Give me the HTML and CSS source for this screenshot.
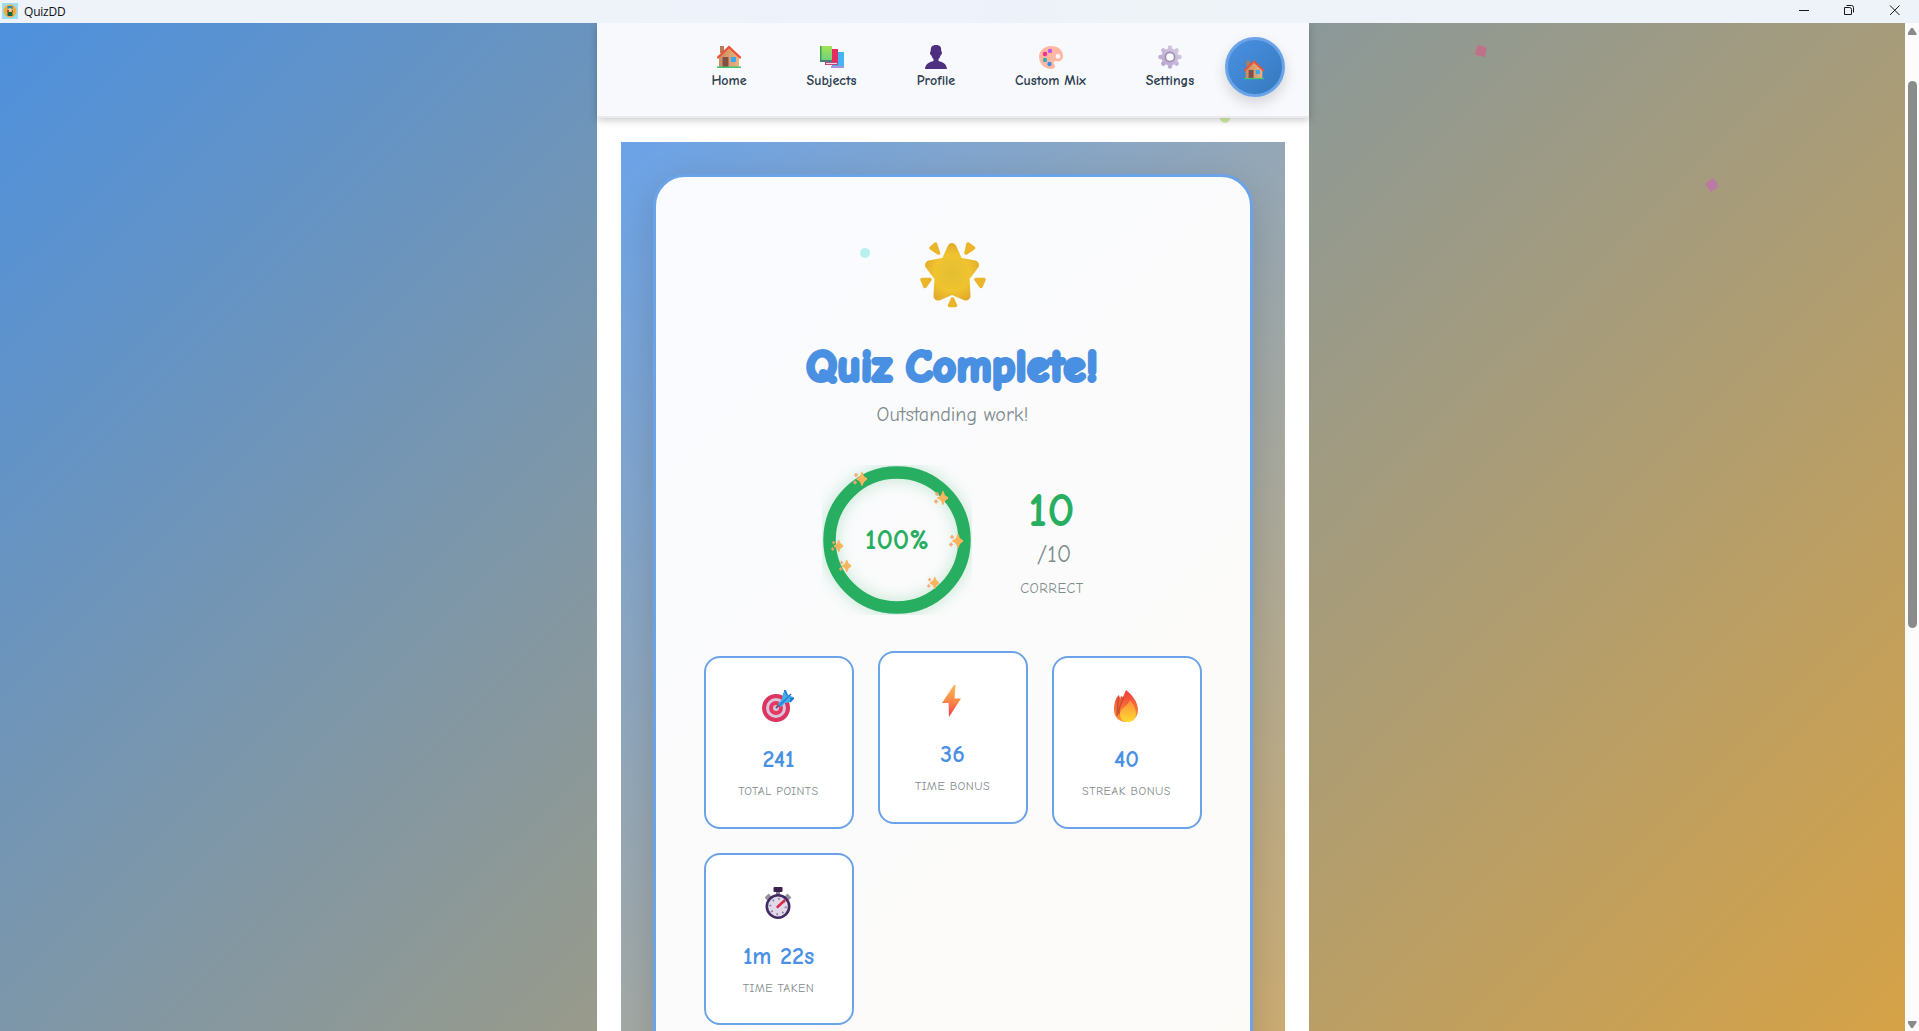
FILE: index.html
```html
<!DOCTYPE html>
<html lang="en">
<head>
<meta charset="utf-8">
<title>QuizDD</title>
<link rel="stylesheet" href="styles.css">
</head>
<body>
<svg class="defs" width="0" height="0" aria-hidden="true">
  <defs>
    <linearGradient id="wall"><stop offset="0" stop-color="#c98d60"/><stop offset="1" stop-color="#eab27f"/></linearGradient>
    <linearGradient id="bolt" x2="0" y2="1"><stop offset="0" stop-color="#fbb84b"/><stop offset=".55" stop-color="#fa8347"/><stop offset="1" stop-color="#f0374f"/></linearGradient>
    <linearGradient id="flame" x2="0" y2="1"><stop offset="0" stop-color="#f03a3c"/><stop offset="1" stop-color="#ff9a35"/></linearGradient>
    <linearGradient id="core" x2="0" y2="1"><stop offset="0" stop-color="#ff8b38"/><stop offset="1" stop-color="#ffdb32"/></linearGradient>
    <radialGradient id="gold" gradientUnits="userSpaceOnUse" cx="32" cy="31" r="30"><stop offset="0" stop-color="#e3be32"/><stop offset=".6" stop-color="#f0c32f"/><stop offset="1" stop-color="#e2aa2a"/></radialGradient>
    <linearGradient id="gear" gradientUnits="userSpaceOnUse" x1="0" y1="24" x2="24" y2="0"><stop offset="0" stop-color="#b09cc9"/><stop offset="1" stop-color="#dcd3e8"/></linearGradient>
    <linearGradient id="green" x2="0" y2="1"><stop offset="0" stop-color="#a5e353"/><stop offset="1" stop-color="#6dcf80"/></linearGradient>
    <linearGradient id="spark" x2="0" y2="1"><stop offset="0" stop-color="#f9cc4c"/><stop offset="1" stop-color="#fa9d70"/></linearGradient>
    <symbol id="house" viewBox="0 0 24 24">
      <path d="M3 1h4v7H3z" fill="#b97b55"/>
      <path d="M2 11 12 2l10 9v11H2z" fill="url(#wall)"/>
      <path d="M.9 12.500 12 2l11.100 10.500" fill="none" stroke="#ef5138" stroke-width="2.300" stroke-linecap="round"/>
      <path d="M5.500 12h6v10h-6z" fill="#80514a"/>
      <path d="M14 12h5v5h-5z" fill="#35a9f4"/>
      <path d="M0 21.500h24V23H0z" fill="#42c66e"/>
    </symbol>
    <symbol id="sparkle" viewBox="0 0 14 14">
      <path d="M9 1q.6 4.500 5 6-4.400 1.500-5 6-.6-4.500-5-6 4.400-1.500 5-6z" fill="url(#spark)" stroke="#f9b45c" stroke-width="1.800" stroke-linejoin="round"/>
      <path d="M3 1l.7 1.500L5 3l-1.300.6L3 5l-.7-1.400L1 3l1.300-.5zM2 8.500l.7 1.300 1.300.7-1.300.7L2 12.500l-.7-1.300L0 10.500l1.300-.7z" fill="#f9a56b" stroke="#f9a56b" stroke-width=".7"/>
    </symbol>
  </defs>
</svg>
<header class="titlebar">
  <svg class="app-icon" viewBox="0 0 16 16"><path fill="#9cdcf0" d="M0 0h16v16H0z"/><circle cx="8" cy="8" r="6.500" fill="#f0ac38"/><path fill="#258bb0" d="M5.500 3h5v3h-5z"/><circle cx="8" cy="7" r="2" fill="#e9c9a0"/><path fill="#176247" d="M5.500 9h5v4h-5z"/><path fill="#ad492d" d="M5 7h2v2H5zM10 7h1v2h-1z"/></svg>
  <span class="app-name">QuizDD</span>
  <svg class="controls" viewBox="0 0 110 22" fill="none" stroke="#191919" stroke-width="1"><path d="M4 10.500h10"/><path d="M49.500 7.500h5q2 0 2 2v5h-7zM51.500 5.500h5q2 0 2 2v5"/><path d="m95 5.500 9.500 9.500M104.500 5.500 95 15"/></svg>
</header>
<div class="viewport">
  <div class="page">
    <div class="app">
      <nav class="nav">
        <a class="item home"><svg class="nav-icon" viewBox="0 0 24 24"><use href="#house"/></svg><span>Home</span></a>
        <a class="item subjects"><svg class="nav-icon" viewBox="0 0 24 24"><path d="M12 7h12v16H12z" fill="#43b5f4"/><path d="M11 21h13v2H11z" fill="#a894df"/><path d="M7 4h11v15H7z" fill="#e32d61"/><path d="M5 17h13v3H5z" fill="#c74573"/><path d="M6 18h11v1H6z" fill="#ead6ea"/><path d="M0 1h12v15H0z" fill="url(#green)"/><path d="M0 1h1.500v15H0z" fill="#3ba052"/><path d="M0 15h12v2H0z" fill="#467e78"/></svg><span>Subjects</span></a>
        <a class="item profile"><svg class="nav-icon" viewBox="0 0 24 24"><path d="M12 0C8 0 6.500 2 6.800 6 5.500 7 6 10 7.500 10.500c.5 2 1.300 3 2 3.500v2C5 17 1.500 19 1 24h22c-.5-5-4-7-8.500-8v-2c.8-.5 1.500-1.500 2-3.500C18 10 18.500 7 17.200 6 17.500 2 16 0 12 0z" fill="#4e2f80"/></svg><span>Profile</span></a>
        <a class="item mix"><svg class="nav-icon" viewBox="0 0 24 24"><path fill-rule="evenodd" d="M12 1C5 1 0 6 0 12c0 7 6 12 12 12 4 0 5-3 3-5-1-2 0-3 2-3 4 1 7-1 7-5C24 5 19 1 12 1zm7 8a2.400 2.400 0 1 1 0 4.800A2.400 2.400 0 0 1 19 9z" fill="#ffb7a4"/><circle cx="11" cy="6" r="2.200" fill="#b957ec"/><circle cx="6" cy="9" r="2.200" fill="#f42e8d"/><circle cx="6" cy="15" r="2.200" fill="#34adad"/><circle cx="10.500" cy="19" r="2.200" fill="#378fe8"/></svg><span>Custom Mix</span></a>
        <a class="item settings"><svg class="nav-icon" viewBox="0 0 24 24"><g stroke="url(#gear)" stroke-width="4.500" stroke-linecap="round"><path d="M12 2.500l.01 19M2.500 12l19 .01M5.300 5.300l13.400 13.400M18.700 5.300 5.300 18.700"/></g><circle cx="12" cy="12" r="6" fill="#f8f9fc" stroke="url(#gear)" stroke-width="5"/><circle cx="12" cy="12" r="4.600" fill="#f8f9fc" stroke="#9d8fae" stroke-width="1.600"/></svg><span>Settings</span></a>
        <button class="home-button" aria-label="Home"><svg viewBox="0 0 24 24"><use href="#house"/></svg></button>
      </nav>
      <main class="results">
        <section class="card">
          <svg class="star" viewBox="0 0 66 66"><g stroke-linejoin="round" stroke="url(#gold)" fill="url(#gold)"><path stroke-width="9" d="M32 5.500l6.500 14.500 16 3L45 35.500l1 18.500-14-6-14 6 1-18.500L9.500 23l16-3z"/><g stroke="#ebb52a" stroke-width="3.500" fill="#ebb52a"><path d="M11 6l4.500-4 3 9zM48 2l5.500 4-7.500 5zM2 37.500h8L5 44.500zM56 37.500h8L61 44.500zM32.500 57l3 6.500h-6z"/></g></g></svg>
          <h1>Quiz Complete!</h1>
          <p class="subtitle">Outstanding work!</p>
          <div class="score">
            <div class="ring">
              <svg class="ring-art" viewBox="0 0 150 150"><circle cx="75" cy="75" r="67.500"/></svg>
              <span class="percent">100%</span>
              <svg class="spark" style="left:31px;top:7px"><use href="#sparkle"/></svg>
              <svg class="spark" style="left:112px;top:26px"><use href="#sparkle"/></svg>
              <svg class="spark" style="left:127px;top:69px"><use href="#sparkle"/></svg>
              <svg class="spark small" style="left:9px;top:75px"><use href="#sparkle"/></svg>
              <svg class="spark small" style="left:17px;top:95px"><use href="#sparkle"/></svg>
              <svg class="spark small" style="left:105px;top:112px"><use href="#sparkle"/></svg>
            </div>
            <div class="tally"><strong>10</strong><span class="total">/10</span><span class="correct">CORRECT</span></div>
          </div>
          <div class="stats">
            <article class="stat"><svg viewBox="0 0 32 32"><circle cx="14" cy="18" r="12" fill="#d8c6df" stroke="#dc3560" stroke-width="4"/><circle cx="14" cy="18" r="5" fill="#d8c6df" stroke="#e93860" stroke-width="4"/><path d="m14 18 10-10" stroke="#6a5372" stroke-width="2"/><path d="m16 14 4-5 1-6 3-3 2 5 5 2-2 5-6 1-4 4z" fill="#43afea"/><path d="m18 15 11-11M28 12l4-4-4 .5M22 1l1-.5 2 5" stroke="#217bd4" stroke-width="1.500" fill="#2381dd"/></svg><b>241</b><span>TOTAL POINTS</span></article>
            <article class="stat raised"><svg viewBox="0 0 32 32"><path d="M18 0 6 18h6.500L13 32 25 13.500h-6.500L19.500 0z" fill="url(#bolt)"/></svg><b>36</b><span>TIME BONUS</span></article>
            <article class="stat"><svg viewBox="0 0 32 32"><path d="M16 0c5 4 12 11 12 20 0 7-5 12-12 12S4 27 4 20C4 13 6 7 9 5l1 4 1-3 2 1z" fill="url(#flame)"/><path d="M9 7C7 14 8 19 7 26M14 7C12 12 8 17 9 24" stroke="#c7502e" stroke-width="1.500" fill="none"/><path d="M20 10c4 5 6 9 6 14s-3 8-8 8-8-3-8-8c0-6 8-8 10-14z" fill="url(#core)"/></svg><b>40</b><span>STREAK BONUS</span></article>
            <article class="stat"><svg viewBox="0 0 32 32"><path d="M14 2h4v7h-4z" fill="#8b778e"/><rect x="11.500" width="9" height="5" rx="1" fill="#39204f"/><path d="m4 12 4-4M24 8l4 4" stroke="#9b8fa2" stroke-width="4"/><circle cx="16" cy="19.500" r="11.200" fill="#e1d9ea" stroke="#402b63" stroke-width="2.600"/><circle cx="16" cy="19.500" r="7.700" fill="none" stroke="#8b7995" stroke-width="2" stroke-dasharray="1.500 4.550"/><path d="m15.500 20 7-6.500" stroke="#dc2847" stroke-width="2.400" stroke-linecap="round"/></svg><b>1m 22s</b><span>TIME TAKEN</span></article>
          </div>
        </section>
      </main>
    </div>
    <i class="confetti rose"></i><i class="confetti violet"></i><i class="confetti mint"></i><i class="confetti lime"></i>
  </div>
  <div class="scrollbar"><i class="arrow up"></i><i class="thumb"></i><i class="arrow down"></i></div>
</div>
</body>
</html>
```
FILE: styles.css
```css
* { box-sizing: border-box; }
body { margin: 0; width: 100vw; height: 100vh; overflow: hidden; font-family: "Comic Neue", Lato, "Open Sans", sans-serif; color: #2c3e50; }
.defs { position: absolute; }
svg { display: block; flex: none; }
.titlebar { height: 23px; display: flex; align-items: center; background: linear-gradient(90deg, #eef3fa 0 30%, #edf2fb 50%, #edf3f7 60%, #eef3fa 75%); }
.app-icon { width: 16px; height: 16px; margin: 0 6px 1px 2px; }
.app-name { font: 12px/22px "Open Sans", sans-serif; color: #111; letter-spacing: -.2px; }
.controls { width: 110px; height: 22px; margin: 0 14px 1px auto; }
.viewport { display: flex; height: calc(100vh - 23px); overflow: hidden; }
.page { position: relative; flex: 1; overflow: hidden; background: linear-gradient(135deg, #4a90e2, #f5a623) 0 -90px / 100% 1780px no-repeat; }
.app { width: 712px; height: 1800px; margin: 0 auto; background: #fff; }
.nav { position: relative; z-index: 3; height: 95px; padding: 14px 24px 0 115px; display: flex; align-items: flex-start; gap: 60px; background: #f8f9fc; border-bottom: 2px solid #e8eaed; box-shadow: 0 2px 8px rgba(0,0,0,.22); }
.item { flex: none; display: flex; flex-direction: column; align-items: center; padding-top: 8px; font-size: 14px; line-height: 18px; font-weight: 700; white-space: nowrap; }
.nav-icon { width: 24px; height: 24px; margin-bottom: 3px; }
.home { width: 35px; }
.subjects { width: 50px; }
.profile { width: 39px; }
.mix { width: 70px; }
.settings { width: 49px; margin-right: -31px; }
.home-button { flex: none; display: grid; place-items: center; width: 60px; height: 60px; margin-left: auto; padding: 5px 2px 0 0; border: 3px solid #6ba3e8; border-radius: 50%; background: linear-gradient(135deg, #4a90e2, #357abd); box-shadow: 0 6px 14px rgba(0,0,0,.15); }
.home-button svg { width: 20px; height: 20px; }
.results { height: 1547px; margin: 24px 24px 0; padding: 32px; background: linear-gradient(135deg, #6ba3e8, #f5b041); }
.card { height: 1480px; padding: 65px 48px; display: flex; flex-direction: column; align-items: center; border: 3px solid #6ba3e8; border-radius: 32px; background: linear-gradient(135deg, #f9fbff, #fcfbfa 50%, #fdfbf6); box-shadow: 0 10px 36px rgba(0,0,0,.15); }
.star { width: 66px; height: 66px; }
h1 { margin: 31px 0 0; font-size: 43.500px; line-height: 56px; font-weight: 700; color: #4a90e2; -webkit-text-stroke: 4.200px #4a90e2; stroke-linejoin: round; letter-spacing: 1px; word-spacing: -3px; white-space: nowrap; }
.subtitle { margin: 6px 0 0; font-size: 20px; line-height: 28px; color: #7f8c8d; }
.score { display: flex; align-items: center; gap: 48px; height: 150px; margin-top: 36px; }
.ring { position: relative; width: 150px; height: 150px; display: grid; place-items: center; }
.ring-art { position: absolute; inset: 0; width: 150px; height: 150px; overflow: hidden; }
.ring-art circle { fill: none; stroke: #27ae60; stroke-width: 12.500; filter: drop-shadow(0 0 8px rgba(39,174,96,.3)); }
.percent { position: relative; font-size: 28.800px; line-height: 32px; padding-left: 1px; font-weight: 700; color: #27ae60; }
.spark { position: absolute; width: 14px; height: 14px; }
.small { width: 12px; height: 12px; }
.tally { width: 64px; display: flex; flex-direction: column; align-items: center; color: #7f8c8d; }
.tally strong { margin-top: 4px; font-size: 48px; line-height: 50px; color: #27ae60; }
.total { margin-top: 1px; font-size: 24px; line-height: 34px; padding-left: 5px; }
.correct { font-size: 14.400px; line-height: 20px; margin-top: 8px; padding-left: 1px; letter-spacing: .5px; }
.stats { display: grid; grid-template-columns: repeat(3, 150px); gap: 24px; margin-top: 41px; }
.stat { height: 172.500px; padding-top: 32px; display: flex; flex-direction: column; align-items: center; border: 2px solid #6ba3e8; border-radius: 16px; background: #fff; }
.raised { transform: translateY(-5px); }
.stat svg { width: 32px; height: 32px; margin-right: 1px; }
.stat b { margin-top: 21px; font-size: 24px; line-height: 32px; color: #4a90e2; white-space: nowrap; }
.stat span { margin-top: 8px; font-size: 12px; line-height: 16px; letter-spacing: .5px; color: #7f8c8d; white-space: nowrap; }
.confetti { position: absolute; width: 10px; height: 10px; border-radius: 50%; z-index: 1; }
.rose { left: 1476px; top: 23px; border-radius: 0; background: #bd728a; transform: rotate(12deg); }
.violet { left: 1707px; top: 157px; border-radius: 0; background: #bb79a6; transform: rotate(55deg); }
.mint { left: 860px; top: 225px; background: #b8f0eb; }
.lime { left: 1220px; top: 90px; background: #d5edaa; }
.scrollbar { width: 14px; display: flex; flex-direction: column; align-items: center; background: #fcfcfc; }
.arrow { width: 9px; height: 7px; background: #8b8b8b; }
.up { margin-top: 5px; clip-path: polygon(40% 0, 60% 0, 100% 80%, 100% 100%, 0 100%, 0 80%); }
.thumb { width: 9px; height: 547px; margin-top: 46px; border-radius: 5px; background: #8b8b8b; }
.down { margin-top: auto; margin-bottom: 3px; clip-path: polygon(0 0, 100% 0, 100% 20%, 60% 100%, 40% 100%, 0 20%); }
```
